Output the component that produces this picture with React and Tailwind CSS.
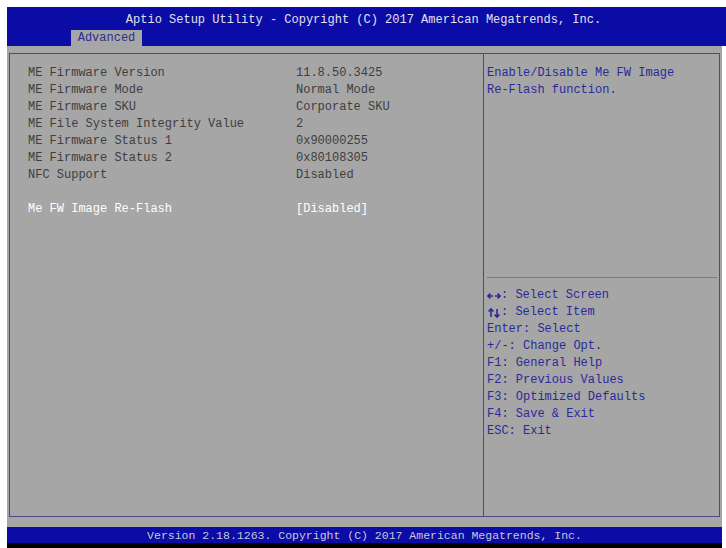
import React from 'react';

const info = [
  ['ME Firmware Version', '11.8.50.3425'],
  ['ME Firmware Mode', 'Normal Mode'],
  ['ME Firmware SKU', 'Corporate SKU'],
  ['ME File System Integrity Value', '2'],
  ['ME Firmware Status 1', '0x90000255'],
  ['ME Firmware Status 2', '0x80108305'],
  ['NFC Support', 'Disabled'],
];

const HArrows = () => (
  <svg width="14" height="17" viewBox="0 0 14 17" className="shrink-0">
    <path d="M1 9h5M3.5 6.5L1 9l2.5 2.5M8 9h5M10.5 6.5L13 9l-2.5 2.5" stroke="currentColor" strokeWidth="1.6" fill="none" />
  </svg>
);

const VArrows = () => (
  <svg width="14" height="17" viewBox="0 0 14 17" className="shrink-0">
    <path d="M4 5v8M1.5 7.5L4 5l2.5 2.5M10 5v8M7.5 10.5L10 13l2.5-2.5" stroke="currentColor" strokeWidth="1.6" fill="none" />
  </svg>
);

const keys = [
  [HArrows, ': Select Screen'],
  [VArrows, ': Select Item'],
  [null, 'Enter: Select'],
  [null, '+/-: Change Opt.'],
  [null, 'F1: General Help'],
  [null, 'F2: Previous Values'],
  [null, 'F3: Optimized Defaults'],
  [null, 'F4: Save & Exit'],
  [null, 'ESC: Exit'],
];

export default function App() {
  return (
    <div className="w-[726px] h-[548px] bg-white pt-[7px] pl-[7px] pr-[4px] overflow-hidden font-['Liberation_Mono',monospace] text-[12px] leading-[17px]">
      <div className="flex flex-col h-full bg-[#a6a6a6]">
        {/* header */}
        <div className="relative h-[39px] bg-[#0b0ba6] -mr-[4px]">
          <div className="pt-[5px] text-center text-[#e0e0ec] pr-[6px]">
            Aptio Setup Utility - Copyright (C) 2017 American Megatrends, Inc.
          </div>
          <div className="absolute left-[64px] bottom-0 w-[71px] h-[16px] bg-[#a6a6a6] text-[#2c2c90] text-center leading-[16px]">
            Advanced
          </div>
        </div>

        {/* body */}
        <div className="flex-1 px-[2px] pt-[7px] pb-[10px]">
          <div className="flex h-full border border-[#4a4a8a]">
            <div className="w-[474px] border-r border-[#4a4a8a] pl-[18px] pt-[11px] text-[#3e3e3e]">
              {info.map(([k, v]) => (
                <div key={k} className="flex">
                  <div className="w-[268px]">{k}</div>
                  <div>{v}</div>
                </div>
              ))}
              <div className="flex mt-[17px] text-white">
                <div className="w-[268px]">Me FW Image Re-Flash</div>
                <div>[Disabled]</div>
              </div>
            </div>
            <div className="flex-1 flex flex-col text-[#2a2a9c]">
              <div className="h-[223px] pl-[3px] pt-[11px]">
                <div>Enable/Disable Me FW Image</div>
                <div>Re-Flash function.</div>
              </div>
              <div className="ml-[3px] mr-[2px] border-t border-[#7a7a7a]" />
              <div className="pl-[3px] pt-[9px]">
                {keys.map(([Icon, t]) => (
                  <div key={t} className="flex">
                    {Icon && <Icon />}
                    <span>{t}</span>
                  </div>
                ))}
              </div>
            </div>
          </div>
        </div>

        {/* footer */}
        <div className="h-[16px] bg-[#0b0ba6] text-[#c8c8d8] text-center leading-[18px] text-[11.5px]">
          Version 2.18.1263. Copyright (C) 2017 American Megatrends, Inc.
        </div>
        <div className="h-[5px] bg-black" />
      </div>
    </div>
  );
}
